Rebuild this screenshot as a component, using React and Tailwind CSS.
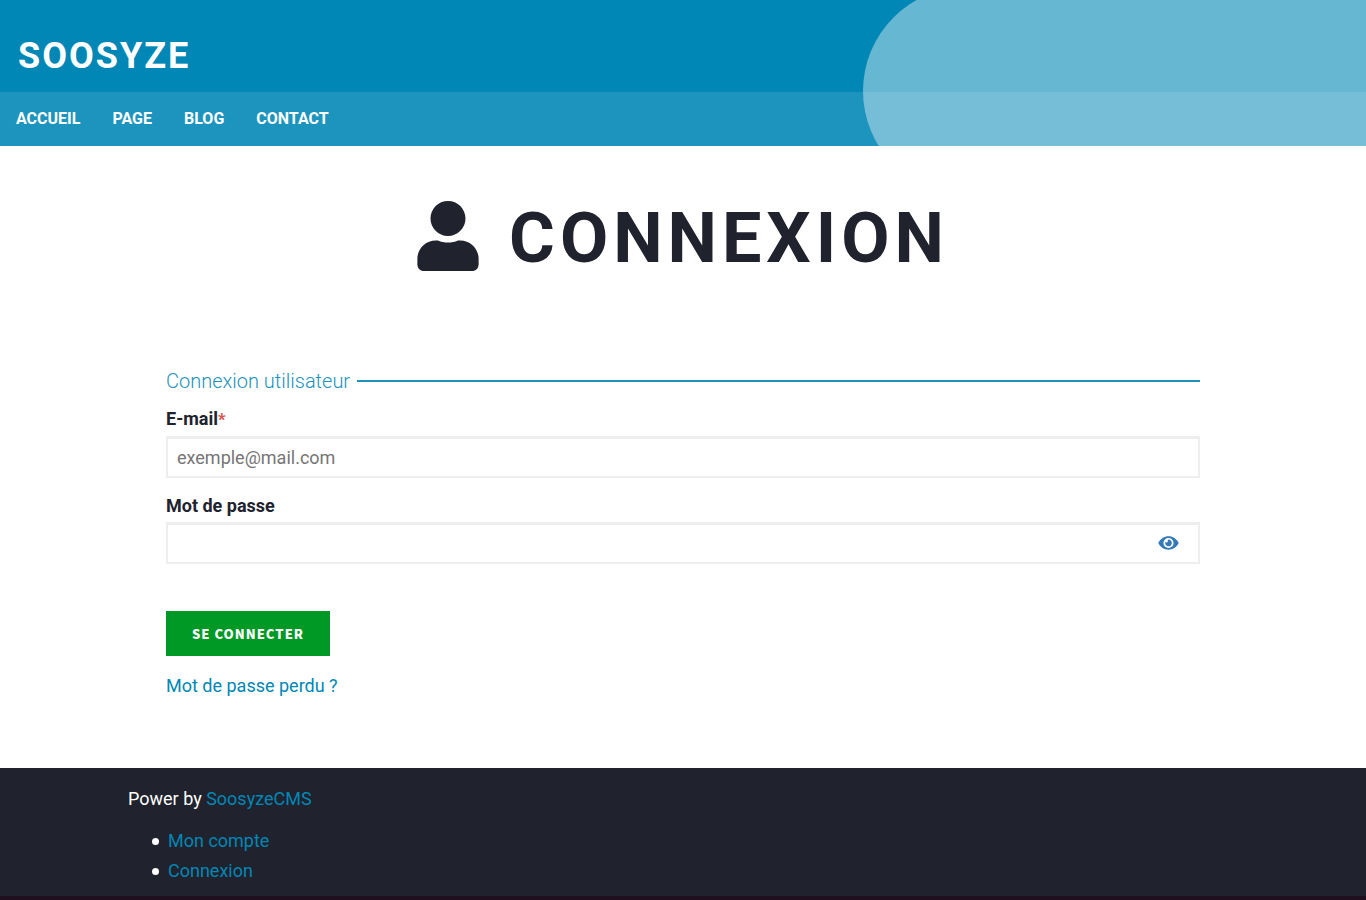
import { FaUser, FaEye } from "react-icons/fa";

const navItems = ["Accueil", "Page", "Blog", "Contact"];
const footerItems = ["Mon compte", "Connexion"];

function Header() {
  return (
    <header className="relative overflow-hidden bg-[#0087b5] text-white">
      <div
        aria-hidden="true"
        className="absolute -top-[13px] -right-32 left-[63.15%] h-[208px] rounded-full bg-white/40"
      />
      <div className="relative px-[18px] pt-7 pb-2">
        <a href="#accueil" className="block w-fit text-[36px] leading-[56px] font-bold tracking-[2px] uppercase">
          Soosyze
        </a>
      </div>
      <nav className="relative bg-white/11">
        <ul className="flex">
          {navItems.map((item) => (
            <li key={item}>
              <a href={"#" + item.toLowerCase()} className="block px-4 py-3 text-base leading-[30px] font-bold uppercase">
                {item}
              </a>
            </li>
          ))}
        </ul>
      </nav>
    </header>
  );
}

function LoginForm() {
  return (
    <form className="mx-auto w-full max-w-[1110px] px-[38px]" onSubmit={(e) => e.preventDefault()}>
      <fieldset className="min-w-0">
        <legend className="flex w-full items-center gap-[7px] text-[20px] leading-[30px] font-light text-[#1c92bd]">
          Connexion utilisateur
          <span className="h-0.5 flex-1 bg-[#1c92bd]" />
        </legend>
        <div className="pt-2">
          <label htmlFor="email" className="block text-[18px] leading-[30px] font-bold">
            E-mail<span className="text-[16px] font-black text-[#d9534f]">*</span>
          </label>
          <input
            id="email"
            type="email"
            required
            placeholder="exemple@mail.com"
            className="mt-px block h-[42px] w-full border-2 border-t-3 border-[#eeeeee] bg-white px-[9px] text-[18px] placeholder:text-[#757575]"
          />
        </div>
        <div className="pt-[13px]">
          <label htmlFor="password" className="block text-[18px] leading-[30px] font-bold">
            Mot de passe
          </label>
          <div className="relative mt-px">
            <input
              id="password"
              type="password"
              className="block h-[42px] w-full border-2 border-t-3 border-[#eeeeee] bg-white pr-14 pl-[9px] text-[18px]"
            />
            <button
              type="button"
              aria-label="Afficher le mot de passe"
              className="absolute inset-y-0 right-[21px] flex items-center text-[#337ab7]"
            >
              <FaEye className="h-[18px] w-[21px]" />
            </button>
          </div>
        </div>
      </fieldset>
      <button
        type="submit"
        className="mt-[47px] block bg-[#009926] px-[26px] text-[13px] leading-[45px] font-black tracking-[1px] text-white uppercase [font-family:'Noto_Sans_CJK_JP',sans-serif]"
      >
        Se connecter
      </button>
      <a href="#mot-de-passe" className="mt-[15px] block w-fit text-[18px] leading-[30px] text-[#0087b5]">
        Mot de passe perdu ?
      </a>
    </form>
  );
}

export default function App() {
  return (
    <div className="flex min-h-screen flex-col bg-white font-[Roboto,sans-serif] text-[#20222d]">
      <Header />
      <main className="pb-[67px]">
        <h1 className="flex items-center justify-center gap-[30px] pt-[49px] pb-[89px] text-[70px] leading-[78px] font-bold tracking-[5px] uppercase">
          <FaUser className="h-[70px] w-[62px]" />
          <span className="pt-1">Connexion</span>
        </h1>
        <LoginForm />
      </main>
      <footer className="grow border-b-4 border-[#20101f] bg-[#20222d] px-4 text-[18px] leading-[30px] text-white">
        <div className="mx-auto w-full max-w-[1110px] pt-4">
          <p>
            Power by{" "}
            <a href="#soosyze" className="text-[#0087b5]">
              SoosyzeCMS
            </a>
          </p>
          <ul className="pt-3 pl-6">
            {footerItems.map((item) => (
              <li key={item} className="flex items-center gap-[9px] before:size-[7px] before:rounded-full before:bg-white">
                <a href={"#" + item.replace(" ", "-").toLowerCase()} className="text-[#0087b5]">
                  {item}
                </a>
              </li>
            ))}
          </ul>
        </div>
      </footer>
    </div>
  );
}
